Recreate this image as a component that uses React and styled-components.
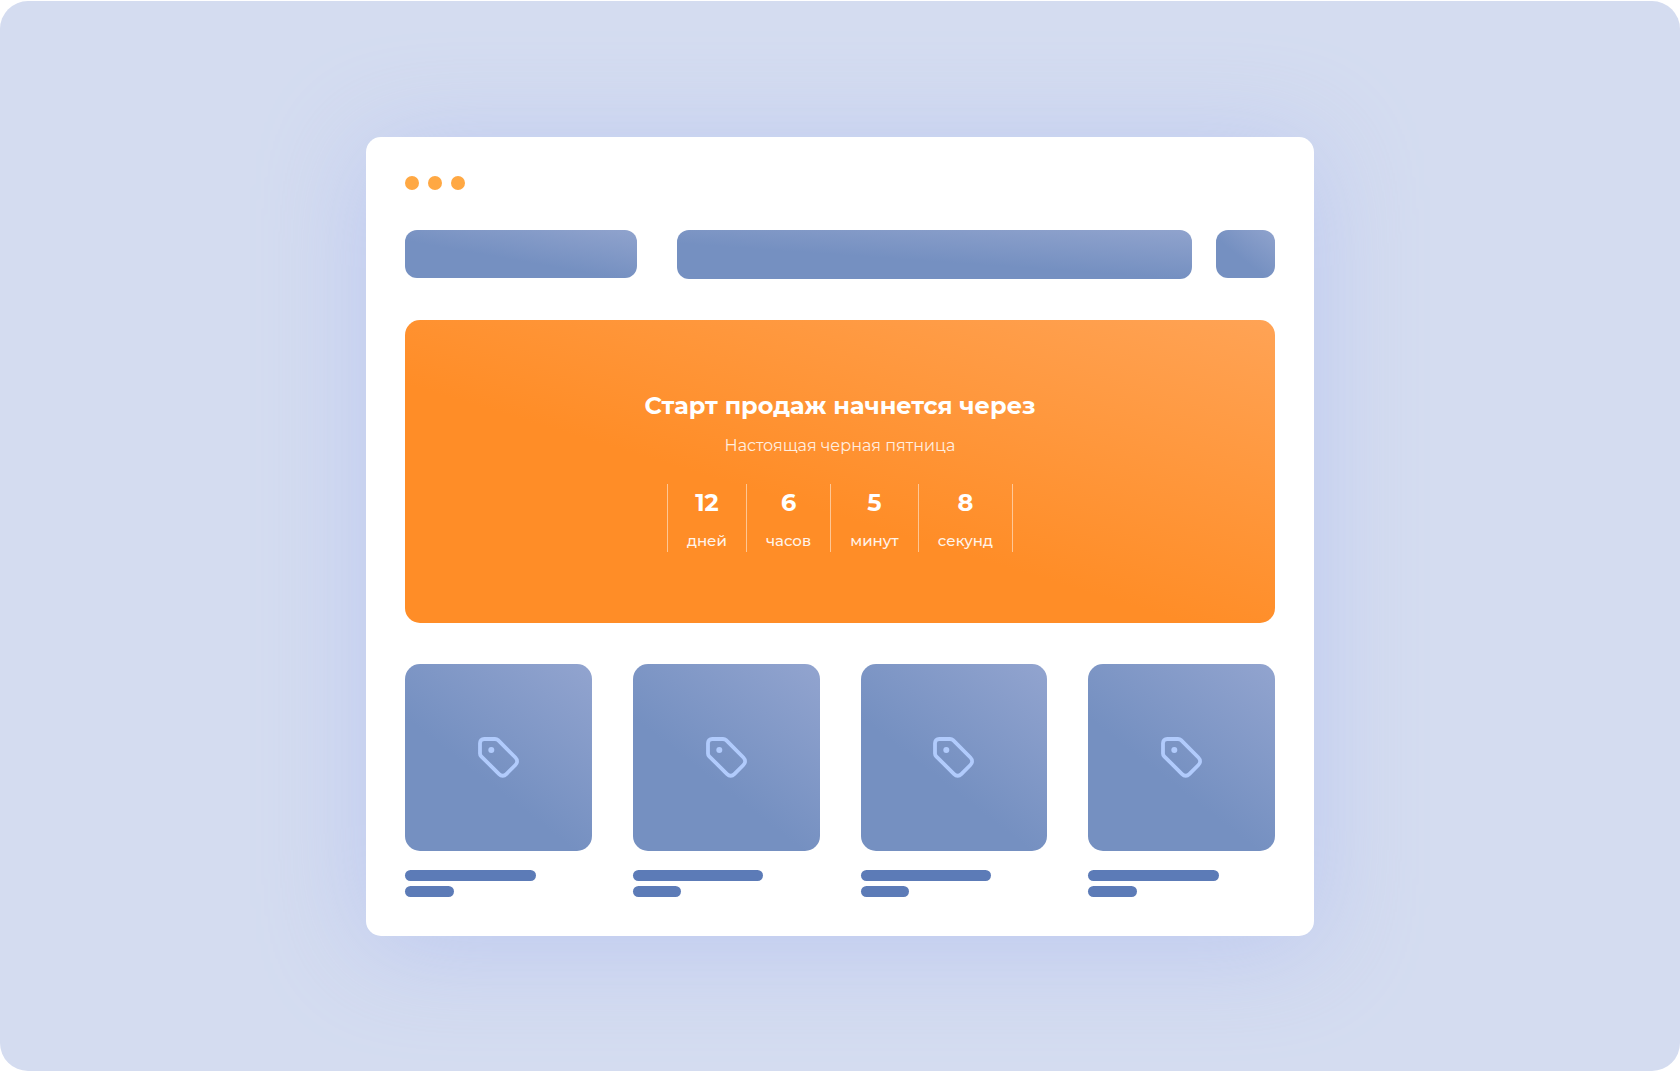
import React from 'react';
import styled, { createGlobalStyle } from 'styled-components';

const GlobalStyle = createGlobalStyle`
	* {
		box-sizing: border-box;
	}
	body {
		margin: 0;
		background: #ffffff;
		font-family: 'Montserrat', 'Inter', 'Noto Sans', sans-serif;
	}
`;

const Stage = styled.main`
	display: flex;
	justify-content: center;
	margin-top: 1px;
	padding: 136px 24px 135px;
	border-radius: 28px;
	background: #d4dcf0;
`;

const Window = styled.section`
	width: 100%;
	max-width: 948px;
	padding: 39px;
	border-radius: 15px;
	background: #ffffff;
	box-shadow: 0 10px 105px rgba(164, 180, 240, 0.48);
`;

const Dots = styled.div`
	display: flex;
	gap: 9px;
	margin-bottom: 40px;
`;

const Dot = styled.span`
	width: 14px;
	height: 14px;
	border-radius: 50%;
	background: #ffa843;
`;

const Header = styled.header`
	display: flex;
	gap: 24px;
	margin-bottom: 41px;
`;

const HeaderBlock = styled.div`
	flex: ${props => props.$flex};
	height: ${props => props.$height || '48px'};
	margin-right: ${props => props.$space || 0};
	border-radius: 12px;
	background: linear-gradient(${props => props.$angle}, #90a3cd, #7590c1 58%);
`;

const Banner = styled.section`
	display: flex;
	flex-direction: column;
	align-items: center;
	justify-content: center;
	min-height: 303px;
	margin-bottom: 41px;
	padding: 24px;
	border-radius: 15px;
	color: #ffffff;
	text-align: center;
	background: linear-gradient(197deg, #ffa355, #ff8d27 58%);
`;

const Title = styled.h1`
	margin: 0;
	font-size: 24px;
	line-height: 30px;
	font-weight: 700;
`;

const SubTitle = styled.p`
	margin: 15px 0 28px;
	font-size: 16px;
	line-height: 20px;
	font-weight: 400;
	opacity: 0.85;
`;

const Timer = styled.div`
	display: flex;
	border-left: 1px solid rgba(255, 255, 255, 0.5);
`;

const TimerItem = styled.div`
	display: flex;
	flex-direction: column;
	justify-content: space-between;
	height: 68px;
	padding: 5px 19px 0;
	border-right: 1px solid rgba(255, 255, 255, 0.5);
	.value {
		font-size: 24px;
		line-height: 28px;
		font-weight: 700;
	}
	.unit {
		font-size: 15px;
		line-height: 22px;
		font-weight: 500;
		opacity: 0.9;
	}
`;

const Products = styled.div`
	display: grid;
	grid-template-columns: repeat(4, 1fr);
	gap: 41px;
`;

const Thumb = styled.div`
	display: flex;
	align-items: center;
	justify-content: center;
	aspect-ratio: 1;
	margin-bottom: 19px;
	border-radius: 15px;
	background: linear-gradient(218deg, #92a4cf, #7590c1 60%);
`;

const Line = styled.div`
	width: ${props => props.$width};
	height: 11px;
	margin-top: 5px;
	border-radius: 6px;
	background: #5c7bb7;
`;

const TagIcon = () => (
	<svg width="41" height="41" viewBox="0 0 41 41" fill="none" aria-hidden="true">
		<path
			d="M2 6.2C2 3.6 3.6 2 6.2 2H17C18.4 2 19.2 2.3 20.1 3.2L37.4 20.5C39.6 22.7 39.6 25.8 37.4 28L28.3 37.1C26.1 39.3 23.3 39.3 21.1 37.1L3.2 19.3C2.3 18.4 2 17.6 2 16.4Z"
			stroke="#b1cbfc"
			strokeWidth="3.8"
			strokeLinejoin="round"
		/>
		<circle cx="13.3" cy="13" r="3" fill="#b1cbfc" />
	</svg>
);

const timer = [
	{ value: 12, unit: 'дней' },
	{ value: 6, unit: 'часов' },
	{ value: 5, unit: 'минут' },
	{ value: 8, unit: 'секунд' },
];

const products = [1, 2, 3, 4];

export default function App() {
	return (
		<>
			<GlobalStyle />
			<Stage>
				<Window>
					<Dots>
						<Dot /><Dot /><Dot />
					</Dots>
					<Header>
						<HeaderBlock $flex={232} $angle={'190deg'} $space={'16px'} />
						<HeaderBlock $flex={515} $angle={'184deg'} $height={'49px'} />
						<HeaderBlock $flex={59} $angle={'218deg'} />
					</Header>
					<Banner>
						<Title>Старт продаж начнется через</Title>
						<SubTitle>Настоящая черная пятница</SubTitle>
						<Timer>
							{timer.map(item => (
								<TimerItem key={item.unit}>
									<div className={"value"}>{item.value}</div>
									<div className={"unit"}>{item.unit}</div>
								</TimerItem>
							))}
						</Timer>
					</Banner>
					<Products>
						{products.map(id => (
							<div key={id}>
								<Thumb><TagIcon /></Thumb>
								<Line $width={'70%'} />
								<Line $width={'26%'} />
							</div>
						))}
					</Products>
				</Window>
			</Stage>
		</>
	);
}
